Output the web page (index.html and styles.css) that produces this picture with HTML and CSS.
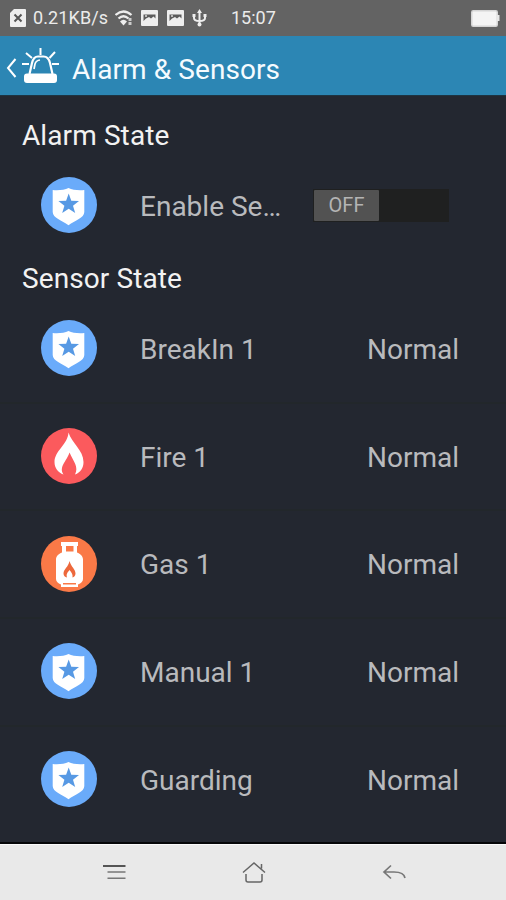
FILE: index.html
```
<!DOCTYPE html>
<html lang="en">
<head>
<meta charset="utf-8">
<title>Alarm &amp; Sensors</title>
<link rel="stylesheet" href="styles.css">
</head>
<body>
<svg class="defs" width="0" height="0" aria-hidden="true">
  <symbol id="shield" viewBox="0 0 56 56">
    <circle cx="28" cy="28" r="28" fill="#6aabfa"/>
    <path d="M27.500 11C31.500 13 37.500 13.500 43.300 13V35C43.300 41 34 43.500 27.500 48.300C21 43.500 11.700 41 11.700 35V13C17.500 13.500 23.500 13 27.500 11Z" fill="#fff"/>
    <path d="M27.700 16.500L30.300 23.700L38 24L32 28.700L34.200 36L27.700 31.800L21.200 36L23.400 28.700L17.400 24L25.100 23.700Z" fill="#5799e4"/>
  </symbol>
  <symbol id="fire" viewBox="0 0 56 56">
    <circle cx="28" cy="28" r="28" fill="#fb5a5d"/>
    <path d="M27.500 4.500C30.500 15 42.500 22 42.500 34C42.500 40 39.500 44.500 34 46.500C38 39 32.500 33.500 28.500 24.500C25.500 33.500 17.500 39 22.500 46.500C17 44.500 13.500 40 13.500 34C13.500 23 27 16 27.500 4.500Z" fill="#fff"/>
  </symbol>
  <symbol id="gas" viewBox="0 0 56 56">
    <circle cx="28" cy="28" r="28" fill="#fa7947"/>
    <path fill-rule="evenodd" d="M20 6H37V10H36V16.500C39.500 18 42 20 42 23.500V43C42 45.500 40 47.500 37 48.500V51H20V48.500C17 47.500 15 45.500 15 43V23.500C15 20 17.500 18 21 16.500V10H20ZM25 10V15.500H32.500V10ZM22 47V48.500H35V47Z" fill="#fff"/>
    <path d="M28.500 25C30 31 34.500 33 34.500 37.500C34.500 40 33 41 31.500 41.500C32 38 30.500 36.500 28.500 34C26.500 36.500 25 38 26 41.500C24 41 22.500 40 22.500 37.500C22.500 33 27.500 31 28.500 25Z" fill="#ed683b"/>
  </symbol>
  <symbol id="picture" viewBox="0 0 17 16">
    <rect width="17" height="16" rx="1" fill="#eee"/>
    <path d="M2.500 11V4.500H14.500V8.500L12.500 6.500L10 8.500L8 7L5 8.500Z" fill="#5c5c5c"/>
    <circle cx="5" cy="6" r="1" fill="#ddd"/>
  </symbol>
</svg>
<div class="screen">
  <div class="status">
    <svg class="sim" width="16" height="18" viewBox="0 0 16 18"><path d="M4 0H15Q16 0 16 1V17Q16 18 15 18H1Q0 18 0 17V4Z" fill="#eee"/><path d="M4.500 5.500L11.500 12.500M11.500 5.500L4.500 12.500" stroke="#555" stroke-width="2"/></svg>
    <span class="speed">0.21KB/s</span>
    <svg class="wifi" width="20" height="16" viewBox="0 0 20 16"><path d="M.5 5Q8.500 -2 16.500 5M3.500 8.500Q8.500 4 13.500 8.500" fill="none" stroke="#eee" stroke-width="2.300"/><path d="M5 11.500Q8.500 8 12 11.500L8.500 15.500Z" fill="#eee"/><path d="M13.500 8H16.500V11H13.500ZM13.500 12H16.500V15H13.500Z" fill="#ccc"/></svg>
    <svg class="pic" width="17" height="16"><use href="#picture"/></svg>
    <svg class="pic" width="17" height="16"><use href="#picture"/></svg>
    <svg class="usb" width="15" height="18" viewBox="0 0 15 18"><path d="M7.500 2V16M2 7V9Q2 12 7.500 12M13 6V9Q13 12 7.500 12" fill="none" stroke="#eee" stroke-width="2"/><path d="M7.500 0L10 4H5ZM.5 5H3.500V8H.5ZM11.500 5H14.500V8H11.500Z" fill="#eee"/><circle cx="7.500" cy="15.500" r="2" fill="#eee"/></svg>
    <span class="clock">15:07</span>
    <svg class="battery" width="29" height="17" viewBox="0 0 29 17"><rect x=".75" y=".75" width="25.500" height="15.500" rx="1.500" fill="#f4f4f4" stroke="#d5d5d5" stroke-width="1.500"/><path d="M26 5H28.500V11H26Z" fill="#e6e6e6"/></svg>
  </div>
  <header class="header">
    <svg width="56" height="42" viewBox="0 0 56 42" fill="none" stroke="#fff">
      <path d="M9.500 15L2 24L9.500 33" stroke-width="2"/>
      <path d="M23.500 30L26 19Q27.500 12.500 32 12.500H37.500Q42.500 12.500 44 19L46.500 30" stroke-width="2.200"/>
      <path d="M28 25L29 20Q30 16.500 34 16" stroke-width="1.700"/>
      <path d="M34.500 4V11M20 9L26 14M49 8L43.500 14M16 20H23M46 20H53" stroke-width="2"/>
      <rect x="18" y="29.500" width="33" height="9.500" rx="3" fill="#fff" stroke="none"/>
    </svg>
    <h1 class="title">Alarm &amp; Sensors</h1>
  </header>
  <main class="content">
    <h2 class="section first">Alarm State</h2>
    <div class="row control">
      <svg class="icon"><use href="#shield"/></svg>
      <span class="name">Enable Se…</span>
      <div class="switch"><span class="thumb">OFF</span></div>
    </div>
    <h2 class="section">Sensor State</h2>
    <div class="list">
      <div class="row"><svg class="icon"><use href="#shield"/></svg><span class="name">BreakIn 1</span><span class="value">Normal</span></div>
      <div class="row"><svg class="icon"><use href="#fire"/></svg><span class="name">Fire 1</span><span class="value">Normal</span></div>
      <div class="row"><svg class="icon"><use href="#gas"/></svg><span class="name">Gas 1</span><span class="value">Normal</span></div>
      <div class="row"><svg class="icon"><use href="#shield"/></svg><span class="name">Manual 1</span><span class="value">Normal</span></div>
      <div class="row"><svg class="icon"><use href="#shield"/></svg><span class="name">Guarding</span><span class="value">Normal</span></div>
    </div>
  </main>
  <nav class="nav">
    <svg width="24" height="24" viewBox="0 0 24 24" fill="none" stroke="#777" stroke-width="1.500"><path d="M1 6H23.500" stroke="#444" stroke-width="1.800"/><path d="M5.500 12H23.500M5.500 18.300H23.500"/></svg>
    <svg width="24" height="24" viewBox="0 0 24 24" fill="none" stroke="#666" stroke-width="1.500"><path d="M1 12.500L12 3L23 12.500M19.500 4V8.500"/><path d="M4 14V20Q4 22 6 22H18Q20 22 20 20V14"/></svg>
    <svg width="24" height="24" viewBox="0 0 24 24" fill="none" stroke="#777" stroke-width="1.700"><path d="M9 5.500L2 12L9 18.500M2 12H12Q22 12 23 18"/></svg>
  </nav>
</div>
</body>
</html>
```
FILE: styles.css
```
* {
  box-sizing: border-box;
}

body {
  margin: 0;
  font-family: Roboto, "Liberation Sans", sans-serif;
}

.defs {
  display: none;
}

.screen {
  display: flex;
  flex-direction: column;
  width: 506px;
  height: 900px;
  overflow: hidden;
  background: #232730;
}

.status {
  display: flex;
  flex: none;
  align-items: center;
  height: 36px;
  padding: 0 6px 0 10px;
  background: #636363;
  color: #ebebeb;
  font-size: 18px;
  line-height: 36px;
}

.status svg {
  flex: none;
}

.speed {
  width: 82px;
  margin-left: 7px;
  letter-spacing: 0.1px;
  white-space: nowrap;
}

.pic {
  margin-left: 6px;
}

.pic + .pic {
  margin-left: 9px;
}

.usb {
  margin-left: 8px;
}

.clock {
  margin-left: 24px;
}

.battery {
  margin-left: auto;
}

.header {
  display: flex;
  flex: none;
  align-items: center;
  height: 60px;
  padding: 8px 0 9px 6px;
  border-bottom: 1px solid #1d3442;
  background: #2c86b4;
}

.header svg {
  flex: none;
}

.title {
  margin: 9px 0 0 10px;
  color: #f5fbff;
  font-size: 28px;
  font-weight: 400;
  letter-spacing: 0.08px;
  line-height: 36px;
  white-space: nowrap;
}

.content {
  flex: 1;
}

.section {
  height: 36px;
  margin: 0;
  padding-left: 22px;
  color: #f2f2f2;
  font-size: 28px;
  font-weight: 400;
  letter-spacing: 0.1px;
  line-height: 37px;
}

.first {
  margin-top: 21px;
}

.row {
  display: flex;
  align-items: center;
  height: 107.7px;
  padding: 0 47px 0 41px;
  color: #b9babd;
  font-size: 28px;
  line-height: 36px;
}

.list .row {
  border-bottom: 2px solid #22272b;
}

.list .row:last-child {
  border-bottom-color: transparent;
}

.control {
  height: 107px;
  padding-bottom: 2px;
}

.icon {
  flex: none;
  width: 56px;
  height: 56px;
  margin-top: -1.4px;
}

.name {
  width: 170px;
  margin-top: 2px;
  margin-left: 43px;
  white-space: nowrap;
}

.value {
  margin-top: 2px;
  margin-left: auto;
}

.switch {
  display: flex;
  width: 136px;
  height: 33px;
  margin-top: -1px;
  margin-left: 3px;
  padding: 1px;
  background: #1f2020;
}

.thumb {
  width: 65px;
  border-radius: 1px;
  background: #525252;
  color: #b4b4b4;
  font-size: 20px;
  line-height: 31px;
  text-align: center;
}

.nav {
  display: flex;
  flex: none;
  align-items: center;
  justify-content: center;
  gap: 116px;
  height: 58px;
  padding-left: 2px;
  border-top: 2px solid #050608;
  background: #e9e9e9;
  box-shadow: inset 0 1px #fafafa;
}
```
